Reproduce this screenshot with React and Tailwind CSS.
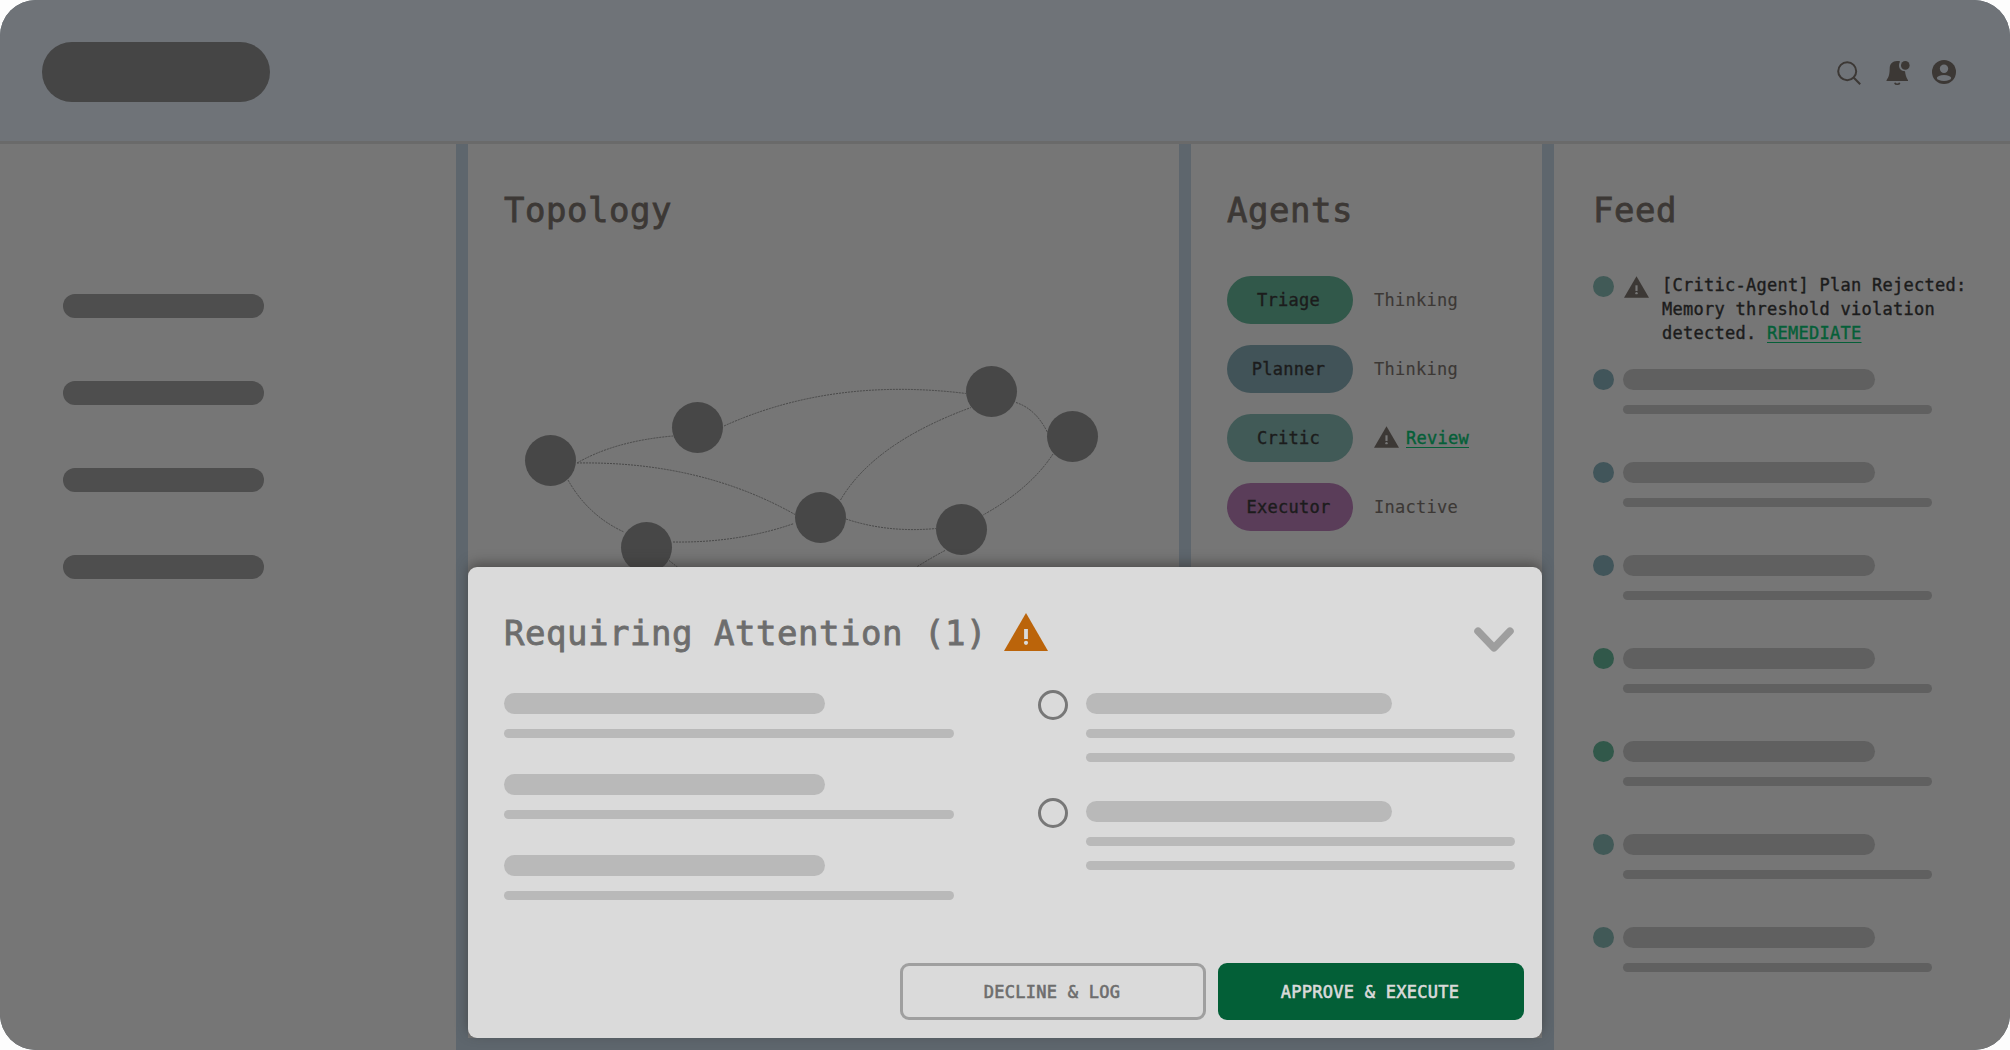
import React from 'react';

const navItems = [1, 2, 3, 4];

const agents = [
  { name: 'Triage', status: 'Thinking', pill: 'bg-[#31584a]' },
  { name: 'Planner', status: 'Thinking', pill: 'bg-[#415358]' },
  { name: 'Critic', status: 'Review', pill: 'bg-[#415a57]', review: true },
  { name: 'Executor', status: 'Inactive', pill: 'bg-[#5a3d59]' }
];

const feedDots = [
  'bg-[#41555a]',
  'bg-[#41555a]',
  'bg-[#41555a]',
  'bg-[#31584a]',
  'bg-[#31584a]',
  'bg-[#415957]',
  'bg-[#415957]'
];

// Coordinates are relative to the top left of the Topology column (468, 144)
const nodes = [
  [82.5, 316.5],
  [229.5, 283.5],
  [523.5, 247.5],
  [604.5, 292.5],
  [352.5, 373.5],
  [493.5, 385.5],
  [178.5, 403.5]
];

const edges = [
  'M109 319Q147 297 205 292',
  'M109 319Q232 317 327 370.5',
  'M100 336Q120 371.5 156 388',
  'M256 282Q364 233 498 249.5',
  'M205 398Q270 399 326 379.5',
  'M372.5 356Q406 299 503 263.5',
  'M378 375Q420 389 468 384.5',
  'M548 258.5Q568 265 579.5 288.5',
  'M585 310Q562 345 515 371',
  'M477 406.5Q463 414 448.5 423',
  'M201 416.5L210 423.5'
];

const WarningIcon = ({ className, mark }) => (
  <svg viewBox="0 0 44 38" className={className}>
    <path d="M22 0L44 38H0Z" fill="currentColor" />
    <rect x="20.1" y="16" width="3.8" height="10" className={mark} />
    <circle cx="22" cy="29.8" r="2.1" className={mark} />
  </svg>
);

const Title = ({ children }) => (
  <h2 className="text-[34px] leading-[40px] tracking-[0.53px] text-[#3c3835] [-webkit-text-stroke:0.8px]">{children}</h2>
);

const Header = () => (
  <header className="flex h-36 shrink-0 items-start justify-between border-b-3 border-[#6a6a6a] bg-[#6f7378] pt-[42px] pr-[54px] pl-[42px]">
    <div className="h-[60px] w-57 rounded-full bg-[#454545]" />
    <div className="mt-[18px] flex items-start text-[#3c3835]">
      <svg viewBox="0 0 24 24" className="mt-px mr-[25px] h-6 w-6" fill="none" stroke="currentColor" strokeWidth="2">
        <circle cx="10.2" cy="10.2" r="9" />
        <path d="M16.8 16.8L23.2 23.2" />
      </svg>
      <svg viewBox="0 0 24 26" className="mr-[22px] h-[26px] w-6" fill="currentColor">
        <path d="M11 1C6.6 1 3.8 4 3.7 8.3C3.6 13.5 3.2 16.5 .5 20.3V21H22V20.3C20 17.4 19.4 14.5 19 11.3C15.2 11.3 13 8.8 13 5.6C13 3.8 13.5 2.4 14.2 1.5C13.3 1.1 12.2 1 11 1Z" />
        <circle cx="19.3" cy="5.4" r="4.3" />
        <path d="M8.8 22.7C9.3 24.8 13.2 24.8 13.7 22.7" fill="none" stroke="currentColor" strokeWidth="1.6" />
      </svg>
      <svg viewBox="0 0 24 24" className="h-6 w-6">
        <circle cx="12" cy="12" r="12" fill="currentColor" />
        <circle cx="12" cy="8.8" r="4.2" className="fill-[#6f7378]" />
        <ellipse cx="12" cy="18" rx="7.2" ry="3" className="fill-[#6f7378]" />
      </svg>
    </div>
  </header>
);

const Topology = () => (
  <section className="relative mb-3 w-[711px] bg-[#767676]">
    <div className="pt-[46px] pl-9">
      <Title>Topology</Title>
    </div>
    <svg viewBox="0 0 711 894" className="absolute inset-0 h-[894px] w-[711px]">
      {edges.map((d) => (
        <path key={d} d={d} fill="none" stroke="#484848" strokeWidth="1" strokeDasharray="2 1" />
      ))}
      {nodes.map(([x, y]) => (
        <circle key={`${x}-${y}`} cx={x} cy={y} r="25.5" fill="#474747" />
      ))}
    </svg>
  </section>
);

const Agents = () => (
  <section className="mb-3 w-[351px] bg-[#767676] pt-[46px] pl-9">
    <Title>Agents</Title>
    <div className="mt-[46px] flex flex-col gap-[21px]">
      {agents.map((agent) => (
        <div key={agent.name} className="flex h-12 items-center gap-[21px] text-[17px] tracking-[0.265px]">
          <div className={`flex h-12 w-[126px] items-center justify-center rounded-full pt-0.5 pr-[3px] text-[#1c1c1c] [-webkit-text-stroke:0.4px] ${agent.pill}`}>
            {agent.name}
          </div>
          {agent.review ? (
            <div className="flex items-center">
              <WarningIcon className="mr-[7px] -mt-0.5 h-[22px] w-[25px] text-[#3c3835]" mark="fill-[#767676]" />
              <a className="pt-0.5 text-[#055f38] underline decoration-1 underline-offset-3 [-webkit-text-stroke:0.4px]">{agent.status}</a>
            </div>
          ) : (
            <span className="pt-0.5 text-[#3c3835] [-webkit-text-stroke:0.15px]">{agent.status}</span>
          )}
        </div>
      ))}
    </div>
  </section>
);

const Feed = () => (
  <section className="flex-1 bg-[#767676] pt-[46px] pl-[39px]">
    <Title>Feed</Title>
    <div className="mt-[46px] flex h-[93px] items-start">
      <div className="h-[21px] w-[21px] rounded-full bg-[#415a57]" />
      <WarningIcon className="ml-2.5 h-[22px] w-[25px] text-[#3c3835]" mark="fill-[#767676]" />
      <p className="-mt-[3px] ml-[13px] text-[17px] leading-6 tracking-[0.265px] whitespace-nowrap text-[#1c1c1c] [-webkit-text-stroke:0.4px]">
        [Critic-Agent] Plan Rejected:
        <br />
        Memory threshold violation
        <br />
        detected. <a className="text-[#055f38] underline decoration-1 underline-offset-3">REMEDIATE</a>
      </p>
    </div>
    {feedDots.map((dot, i) => (
      <div key={i} className="flex h-[93px] gap-[9px]">
        <div className={`h-[21px] w-[21px] rounded-full ${dot}`} />
        <div className="flex flex-col gap-[15px]">
          <div className="h-[21px] w-[252px] rounded-full bg-[#606060]" />
          <div className="h-[9px] w-[309px] rounded-full bg-[#606060]" />
        </div>
      </div>
    ))}
  </section>
);

const AttentionPanel = () => (
  <div className="absolute top-[567px] left-[468px] flex h-[471px] w-[1074px] flex-col rounded-[9px] bg-[#dadada] shadow-[0_-4px_12px_rgba(50,48,46,0.55)]">
    <div className="flex h-[84px] items-start pt-[46px] pr-[27px] pl-9">
      <h2 className="text-[34px] leading-[40px] tracking-[0.53px] text-[#6d6d6d] [-webkit-text-stroke:0.8px]">Requiring Attention (1)</h2>
      <WarningIcon className="ml-[17px] h-[38px] w-11 text-[#bb640a]" mark="fill-[#dadada]" />
      <svg viewBox="0 0 42 26" className="mt-3.5 ml-auto h-[26px] w-[42px]" fill="none" stroke="#9e9e9e" strokeWidth="7.5" strokeLinecap="round" strokeLinejoin="round">
        <path d="M5 4.2L21 20.8L37 4.2" />
      </svg>
    </div>

    <div className="mt-[42px] flex pl-9">
      <div className="flex w-[534px] flex-col gap-9">
        {[1, 2, 3].map((row) => (
          <div key={row} className="flex flex-col gap-[15px]">
            <div className="h-[21px] w-[321px] rounded-full bg-[#b9b9b9]" />
            <div className="h-[9px] w-[450px] rounded-full bg-[#b9b9b9]" />
          </div>
        ))}
      </div>
      <div className="flex flex-col gap-[39px]">
        {[1, 2].map((option) => (
          <div key={option} className="flex items-start gap-[18px]">
            <div className="-mt-[3px] h-[30px] w-[30px] rounded-full border-3 border-[#777777]" />
            <div className="flex flex-col gap-[15px]">
              <div className="h-[21px] w-[306px] rounded-full bg-[#b9b9b9]" />
              <div className="h-[9px] w-[429px] rounded-full bg-[#b9b9b9]" />
              <div className="h-[9px] w-[429px] rounded-full bg-[#b9b9b9]" />
            </div>
          </div>
        ))}
      </div>
    </div>

    <div className="mt-auto flex justify-end gap-3 pr-[18px] pb-[18px] text-[17px] tracking-[0.265px] [-webkit-text-stroke:0.6px]">
      <button className="h-[57px] w-[306px] rounded-[9px] border-3 border-[#9f9f9f] pt-0.5 pr-0.5 text-[#6d6d6d]">DECLINE &amp; LOG</button>
      <button className="h-[57px] w-[306px] rounded-[9px] bg-[#035f37] pt-0.5 pr-0.5 text-[#dadada]">APPROVE &amp; EXECUTE</button>
    </div>
  </div>
);

const App = () => {
  return (
    <div className="h-[1050px] w-[2010px] bg-[#fdfdfd] font-['DejaVu_Sans_Mono',monospace]">
      <div className="relative flex h-full flex-col overflow-hidden rounded-[36px] bg-[#5e666d]">
        <Header />
        <main className="flex flex-1 gap-3">
          <aside className="flex w-[456px] flex-col gap-[63px] bg-[#767676] pt-[150px] pl-[63px]">
            {navItems.map((item) => (
              <div key={item} className="h-6 w-[201px] rounded-full bg-[#4e4e4e]" />
            ))}
          </aside>
          <Topology />
          <Agents />
          <Feed />
        </main>
        <AttentionPanel />
      </div>
    </div>
  );
};

export default App;
